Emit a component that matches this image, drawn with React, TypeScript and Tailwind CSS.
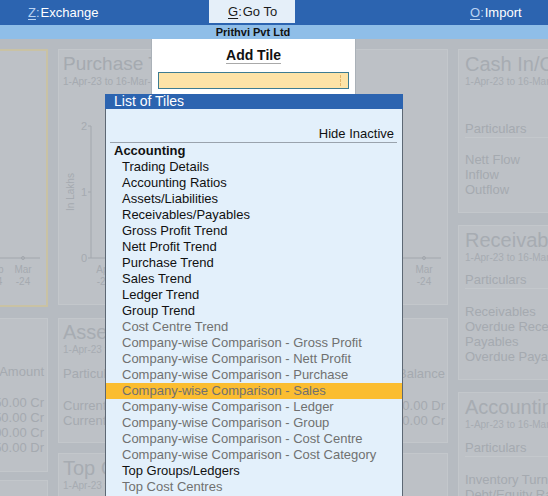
import React from 'react';

type Tile = { label: string; active: boolean };

const accountingTiles: Tile[] = [
  { label: 'Trading Details', active: true },
  { label: 'Accounting Ratios', active: true },
  { label: 'Assets/Liabilities', active: true },
  { label: 'Receivables/Payables', active: true },
  { label: 'Gross Profit Trend', active: true },
  { label: 'Nett Profit Trend', active: true },
  { label: 'Purchase Trend', active: true },
  { label: 'Sales Trend', active: true },
  { label: 'Ledger Trend', active: true },
  { label: 'Group Trend', active: true },
  { label: 'Cost Centre Trend', active: false },
  { label: 'Company-wise Comparison - Gross Profit', active: false },
  { label: 'Company-wise Comparison - Nett Profit', active: false },
  { label: 'Company-wise Comparison - Purchase', active: false },
  { label: 'Company-wise Comparison - Sales', active: false },
  { label: 'Company-wise Comparison - Ledger', active: false },
  { label: 'Company-wise Comparison - Group', active: false },
  { label: 'Company-wise Comparison - Cost Centre', active: false },
  { label: 'Company-wise Comparison - Cost Category', active: false },
  { label: 'Top Groups/Ledgers', active: true },
  { label: 'Top Cost Centres', active: false },
];

const selected = 'Company-wise Comparison - Sales';

const TileHead = ({ title }: { title: string }) => (
  <>
    <div className="h-[24px] text-[20px] leading-[24px] whitespace-nowrap text-[#a7acb2]">{title}</div>
    <div className="h-[12px] text-[10px] leading-[12px] whitespace-nowrap text-[#a7acb2]">1-Apr-23 to 16-Mar-24</div>
  </>
);

const ListOfTiles = () => (
  <div className="absolute left-[105px] top-[94px] bottom-0 w-[298px] flex flex-col">
    <div className="h-[15px] bg-[#2c64b0] text-white text-[14px] leading-[15px] pl-[9px]">List of Tiles</div>
    <div className="flex-1 bg-[#e3f0fb] border-x border-[#5d6874] pt-[17px] text-[13px] leading-[16px]">
      <div className="mx-[4px] mr-[5px] border-b border-[#9aa3ad] text-right pr-[3px] h-[17px] text-[#111]">Hide Inactive</div>
      <div className="pl-[8px] font-bold text-[#111]">Accounting</div>
      {accountingTiles.map((t) => (
        <div
          key={t.label}
          className={`pl-[16px] whitespace-nowrap ${t.label === selected ? 'bg-[#fbbd30]' : ''} ${
            t.active ? 'text-[#111]' : 'text-[#707070]'
          }`}
        >
          {t.label}
        </div>
      ))}
    </div>
  </div>
);

const AddTile = () => (
  <div className="absolute left-[151px] top-[39px] w-[205px] h-[57px] bg-white border-x border-[#aab1b8] flex flex-col items-center pt-[8px]">
    <div className="text-[14px] leading-[16px] font-bold text-[#111] border-b border-[#a9a9a9]">Add Tile</div>
    <div className="relative mt-[8px] w-[191px] h-[17px] bg-[#fde3a7] border border-[#3d7c92]">
      <div className="absolute right-[7px] top-[2px] h-[11px] border-l border-dashed border-[#e2b46a]" />
    </div>
  </div>
);

export default function App() {
  return (
    <div className="relative w-[548px] h-[496px] overflow-hidden bg-[#b6bbc1] font-['Liberation_Sans',Arial,sans-serif]">
      {/* top menu */}
      <div className="h-[25px] bg-[#2c64b0] flex text-[13px]">
        <div className="w-[209px] pl-[28px] flex items-center text-white">
          <span className="text-[#b9d3f3]">
            <span className="underline underline-offset-2">Z</span>:
          </span>
          <span className="ml-[1px]">Exchange</span>
        </div>
        <div className="w-[86px] h-[23px] bg-[#e5eff9] pl-[19px] flex items-center text-[#1b1b1b]">
          <span className="underline underline-offset-2">G</span>:<span className="ml-[1px]">Go To</span>
        </div>
        <div className="flex-1 pl-[175px] flex items-center text-white">
          <span className="text-[#b9d3f3]">
            <span className="underline underline-offset-2">O</span>:
          </span>
          <span className="ml-[1px]">Import</span>
        </div>
      </div>
      <div className="h-[14px] bg-[#8fbee8] flex justify-center pr-[42px] text-[11px] leading-[14px] font-bold text-[#111]">
        Prithvi Pvt Ltd
      </div>

      {/* dimmed dashboard */}
      <div className="flex gap-[10px] pt-[10px] ml-[-102px] text-[#a5aab0]">
        {/* column 1 */}
        <div className="w-[150px] shrink-0 flex flex-col">
          <div className="h-[258px] bg-[#bdc1c6] border-2 border-[#c9c2a4] relative overflow-hidden">
            <svg width="146" height="254" className="block">
              <line x1="0" y1="207" x2="140" y2="207" stroke="#a2a7ad" />
              <circle cx="123" cy="207" r="1.5" fill="none" stroke="#a2a7ad" />
              <text x="123" y="222" fontSize="10" textAnchor="middle" fill="#a5aab0">Mar</text>
              <text x="123" y="234" fontSize="10" textAnchor="middle" fill="#a5aab0">-24</text>
              <text x="95" y="222" fontSize="10" textAnchor="middle" fill="#a5aab0">Feb</text>
              <text x="95" y="234" fontSize="10" textAnchor="middle" fill="#a5aab0">-24</text>
            </svg>
          </div>
          <div className="mt-[11px] h-[154px] bg-[#bdc1c6] border border-[#c3c7cb] pr-[3px] text-right text-[13px]">
            <div className="mt-[45px] leading-[16px]">Amount</div>
            <div className="mt-[15px] leading-[15px]">
              <div>12,350.00 Cr</div>
              <div>4,850.00 Cr</div>
              <div>1,000.00 Cr</div>
              <div>7,250.00 Dr</div>
            </div>
          </div>
          <div className="mt-[8px] h-[60px] bg-[#bdc1c6] border border-[#c3c7cb]" />
        </div>

        {/* column 2 */}
        <div className="w-[390px] shrink-0 flex flex-col">
          <div className="h-[256px] bg-[#bdc1c6] border border-[#c3c7cb] pt-[2px] px-[4px] overflow-hidden">
            <div className="h-[24px] text-[19px] leading-[24px] whitespace-nowrap">Purchase Trend</div>
            <div className="h-[12px] text-[10px] leading-[12px]">1-Apr-23 to 16-Mar-24</div>
            <svg width="388" height="200" className="block -mx-[4px] mt-[12px]">
              <line x1="32" y1="26" x2="32" y2="158" stroke="#a2a7ad" />
              <line x1="29" y1="26" x2="32" y2="26" stroke="#a2a7ad" />
              <line x1="29" y1="92" x2="32" y2="92" stroke="#a2a7ad" />
              <line x1="29" y1="158" x2="32" y2="158" stroke="#a2a7ad" />
              <line x1="32" y1="158" x2="382" y2="158" stroke="#a2a7ad" />
              <text x="28" y="30" fontSize="11" textAnchor="end" fill="#a5aab0">2</text>
              <text x="28" y="96" fontSize="11" textAnchor="end" fill="#a5aab0">1</text>
              <text x="28" y="162" fontSize="11" textAnchor="end" fill="#a5aab0">0</text>
              <text x="15" y="92" fontSize="10" textAnchor="middle" fill="#a5aab0" transform="rotate(-90 15 92)">In Lakhs</text>
              <circle cx="365" cy="158" r="1.5" fill="none" stroke="#a2a7ad" />
              <text x="45" y="173" fontSize="10" textAnchor="middle" fill="#a5aab0">Apr</text>
              <text x="45" y="185" fontSize="10" textAnchor="middle" fill="#a5aab0">-23</text>
              <text x="365" y="173" fontSize="10" textAnchor="middle" fill="#a5aab0">Mar</text>
              <text x="365" y="185" fontSize="10" textAnchor="middle" fill="#a5aab0">-24</text>
            </svg>
          </div>
          <div className="mt-[13px] h-[125px] bg-[#bdc1c6] border border-[#c3c7cb] pt-[1px] px-[4px] pr-[2px]">
            <TileHead title="Assets/Liabilities" />
            <div className="mt-[10px] flex justify-between text-[13px] leading-[16px]">
              <span>Particulars</span>
              <span>Balance</span>
            </div>
            <div className="mt-[16px] text-[13px] leading-[15px]">
              <div className="flex justify-between">
                <span>Current Assets</span>
                <span>2,40,000.00 Dr</span>
              </div>
              <div className="flex justify-between">
                <span>Current Liabilities</span>
                <span>1,10,000.00 Cr</span>
              </div>
            </div>
          </div>
          <div className="mt-[10px] h-[60px] bg-[#bdc1c6] border border-[#c3c7cb] pt-[2px] px-[4px]">
            <TileHead title="Top Groups/Ledgers" />
          </div>
        </div>

        {/* column 3 */}
        <div className="w-[150px] shrink-0 flex flex-col">
          <div className="h-[164px] bg-[#bdc1c6] border border-[#c3c7cb] pt-[2px] pl-[6px] overflow-hidden">
            <TileHead title="Cash In/Out Flow" />
            <div className="mt-[33px] text-[13px] leading-[16px] border-b border-[#c4c8cc]">Particulars</div>
            <div className="mt-[14px] text-[13px] leading-[15px]">
              <div>Nett Flow</div>
              <div>Inflow</div>
              <div>Outflow</div>
            </div>
          </div>
          <div className="mt-[12px] h-[155px] bg-[#bdc1c6] border border-[#c3c7cb] pt-[2px] pl-[6px] overflow-hidden">
            <TileHead title="Receivables/Payables" />
            <div className="mt-[8px] text-[13px] leading-[16px] border-b border-[#c4c8cc]">Particulars</div>
            <div className="mt-[15px] text-[13px] leading-[15px] whitespace-nowrap">
              <div>Receivables</div>
              <div>Overdue Receivables</div>
              <div>Payables</div>
              <div>Overdue Payables</div>
            </div>
          </div>
          <div className="mt-[12px] h-[120px] bg-[#bdc1c6] border border-[#c3c7cb] pt-[2px] pl-[6px] overflow-hidden">
            <TileHead title="Accounting Ratios" />
            <div className="mt-[9px] text-[13px] leading-[16px] border-b border-[#c4c8cc]">Particulars</div>
            <div className="mt-[15px] text-[13px] leading-[15px] whitespace-nowrap">
              <div>Inventory Turnover</div>
              <div>Debt/Equity Ratio</div>
            </div>
          </div>
        </div>
      </div>

      <AddTile />
      <ListOfTiles />
    </div>
  );
}
